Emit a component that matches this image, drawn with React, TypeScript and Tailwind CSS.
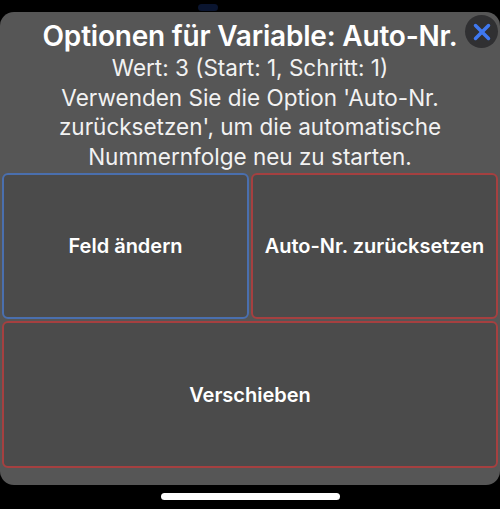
import { X } from "lucide-react";

const App = () => {
  return (
    <div className="relative flex flex-col h-[509px] w-[500px] overflow-hidden bg-black font-['Inter',sans-serif] text-white">
      <div className="absolute left-[198px] top-[4px] h-[7px] w-[20px] rounded-sm bg-[#0a1530]" />
      <div className="h-[12px]" />

      <div className="relative flex flex-col h-[473px] rounded-[14px] bg-[#565656] px-[2px]">
        <div className="flex flex-col items-center pt-[7px] text-center">
          <h1 className="text-[28px] leading-[34px] font-semibold whitespace-nowrap tracking-[-0.2px]">
            Optionen für Variable: Auto-Nr.
          </h1>
          <p className="w-[440px] text-[22.5px] leading-[29.5px] text-[#f2f2f2]">
            Wert: 3 (Start: 1, Schritt: 1)
            <br />
            Verwenden Sie die Option 'Auto-Nr.
            <br />
            zurücksetzen', um die automatische
            <br />
            Nummernfolge neu zu starten.
          </p>
        </div>

        <div className="grid grid-cols-2 gap-[2px] mt-[2px]">
          <button className="h-[146px] rounded-[6px] border-2 border-[#4a6fae] bg-[#4b4b4b] text-[20px] font-semibold">
            Feld ändern
          </button>
          <button className="h-[146px] rounded-[6px] border-2 border-[#a54040] bg-[#4b4b4b] text-[20px] font-semibold">
            Auto-Nr. zurücksetzen
          </button>
          <button className="col-span-2 h-[147px] rounded-[6px] border-2 border-[#a54040] bg-[#4b4b4b] text-[20px] font-semibold">
            Verschieben
          </button>
        </div>

        <button className="absolute right-[2px] top-[3px] flex h-[33px] w-[33px] items-center justify-center rounded-full bg-[#303032] text-[#3f78f0]">
          <X className="h-[26px] w-[26px]" strokeWidth={3.2} />
        </button>
      </div>

      <div className="flex flex-1 items-start justify-center pt-[8px]">
        <div className="h-[7px] w-[179px] rounded-full bg-white" />
      </div>
    </div>
  );
};

export default App;
